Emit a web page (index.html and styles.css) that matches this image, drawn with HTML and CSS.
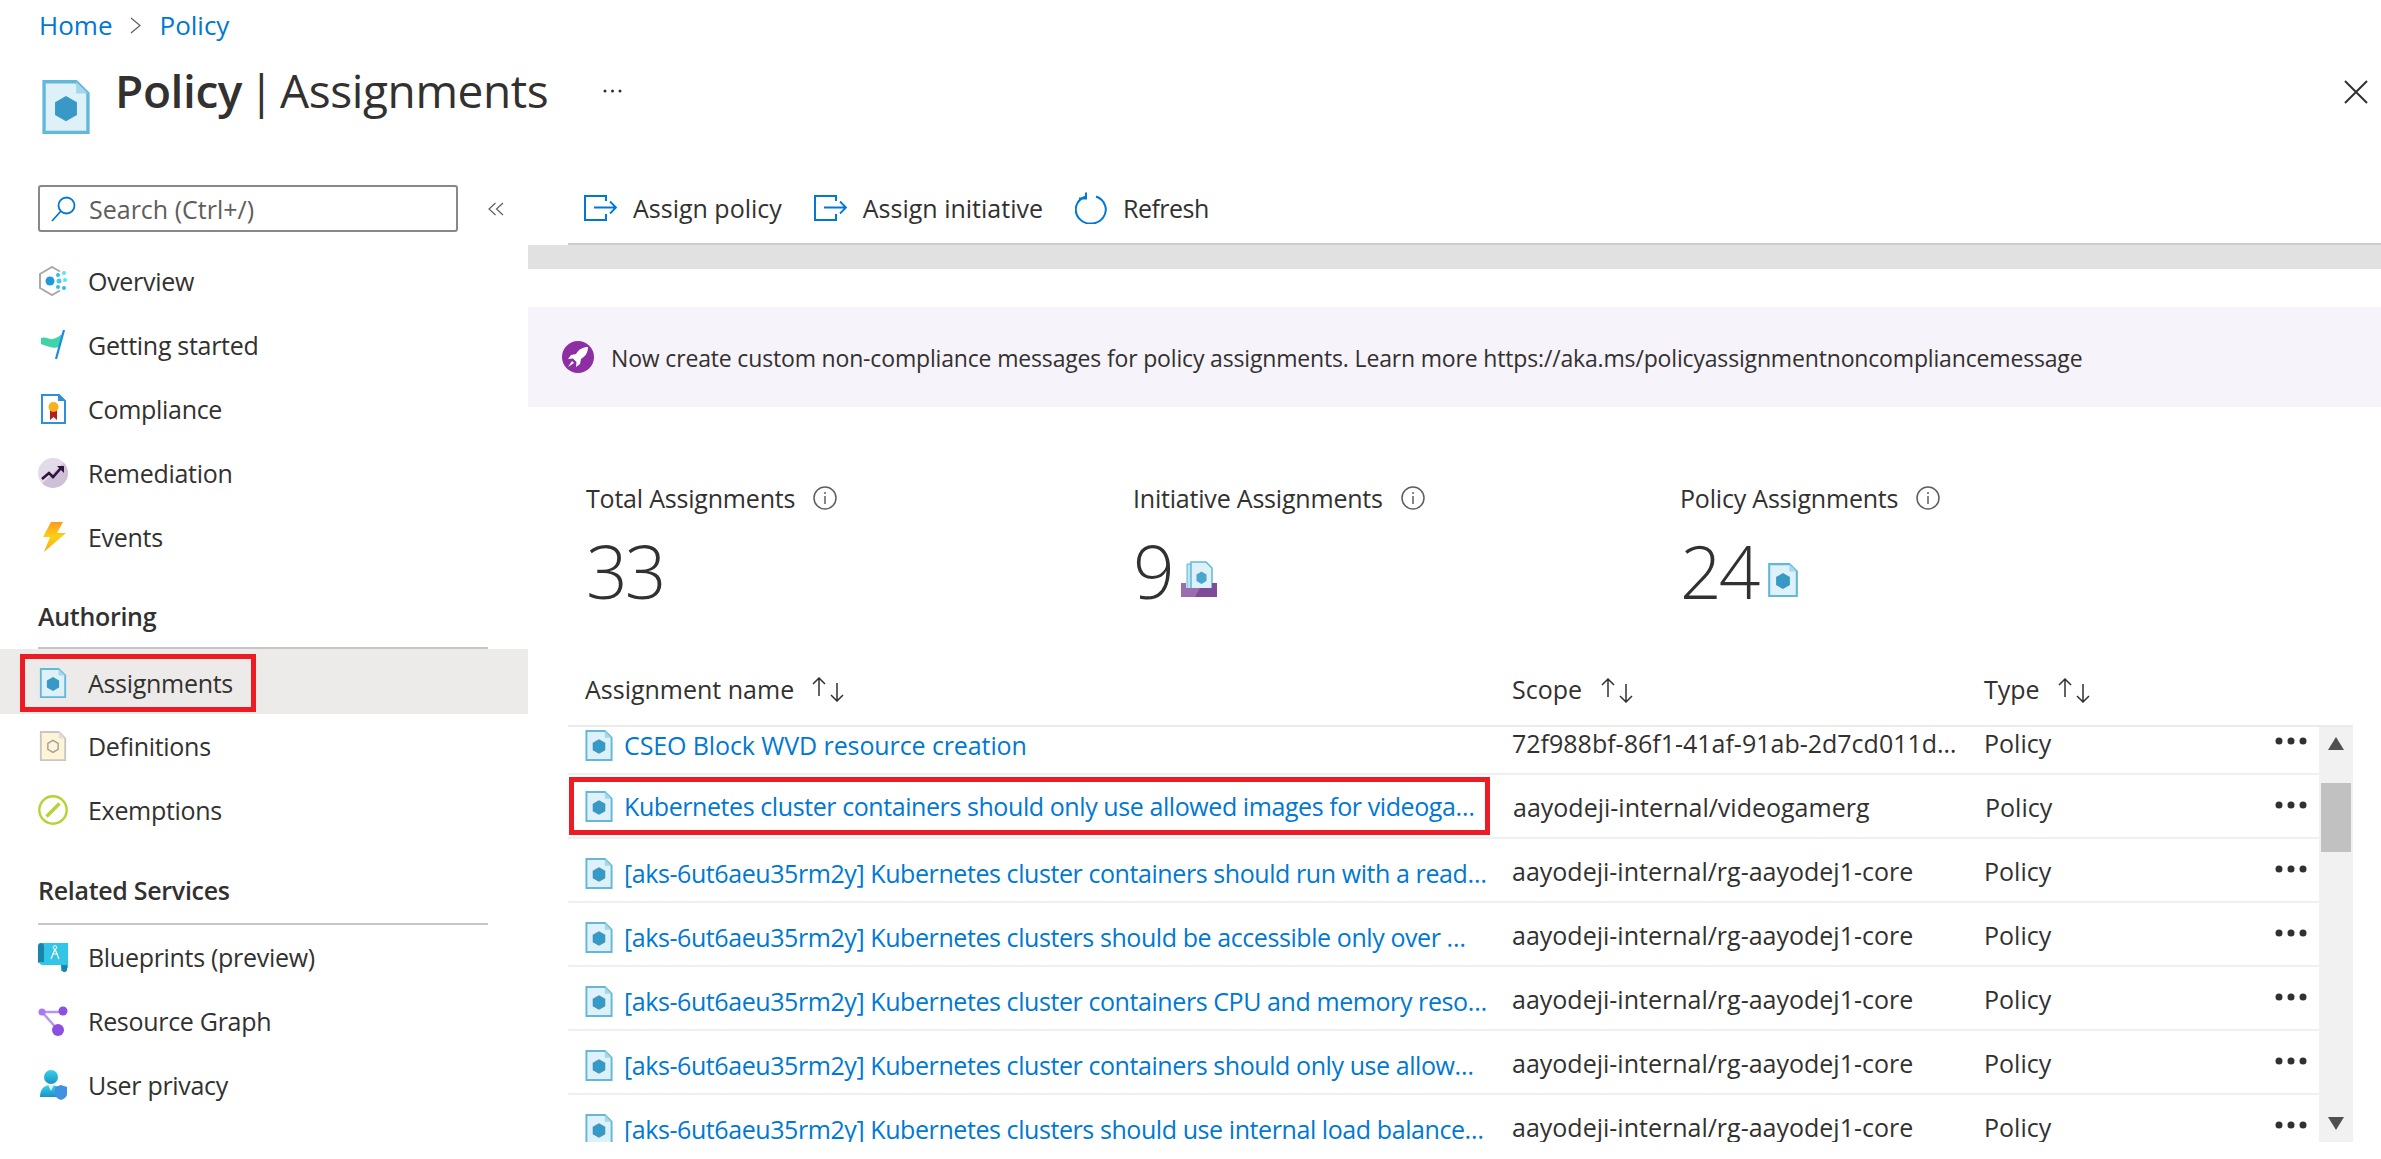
FILE: index.html
```html
<!DOCTYPE html>
<html lang="en">
<head>
    <meta charset="UTF-8">
    <title>Policy | Assignments</title>
    <link rel="stylesheet" href="styles.css">
</head>
<body>
    <svg class="icon-defs" xmlns="http://www.w3.org/2000/svg">
        <defs>
            <linearGradient id="boltFill" x1="0" y1="0" x2="0" y2="1">
                <stop offset="0" stop-color="#fc9a1d"/>
                <stop offset="0.5" stop-color="#fcd116"/>
                <stop offset="1" stop-color="#fba51a"/>
            </linearGradient>
            <linearGradient id="personFill" x1="0" y1="0" x2="0" y2="1">
                <stop offset="0" stop-color="#37d3ec"/>
                <stop offset="1" stop-color="#1b93c0"/>
            </linearGradient>
        </defs>
        <symbol id="i-policy" viewBox="0 0 28 32">
            <path d="M1 1h19l7 7v23H1z" fill="#def0f8" stroke="#62b8da" stroke-width="2"/>
            <path d="M20 1l7 7h-7z" fill="#a3d7ec"/>
            <path d="M14 9.500l6.500 3.700v7.600L14 24.500l-6.500-3.700v-7.600z" fill="#3999c6"/>
        </symbol>
        <symbol id="i-initiative" viewBox="0 0 36 36">
            <path d="M6 3h14l6 6v20H6z" fill="#bfe3f1" stroke="#62b8da" stroke-width="1"/>
            <path d="M10 1h15l6 6v24H10z" fill="#def0f8" stroke="#62b8da" stroke-width="1.500"/>
            <path d="M20.500 10.500l5 3v6.500l-5 3-5-3v-6.500z" fill="#4ba6cf"/>
            <path d="M0 36V22h5v5h26v-5h5v14z" fill="#7f4b98"/>
            <path d="M0 36V22h5v5h14l-5 9z" fill="#9c6dae"/>
        </symbol>
        <symbol id="i-assign" viewBox="0 0 33 26">
            <path d="M22 6V1H1v24h21v-6" fill="none" stroke="#0078d4" stroke-width="2"/>
            <path d="M10 12.500h22M26 6.500l6 6-6 6" fill="none" stroke="#0078d4" stroke-width="1.800"/>
        </symbol>
        <symbol id="i-refresh" viewBox="0 0 33 32">
            <path d="M21 4.500a15 14 0 1 1-11 .2" fill="none" stroke="#0078d4" stroke-width="2"/>
            <path d="M11 .5v6H4" fill="none" stroke="#0078d4" stroke-width="2"/>
        </symbol>
        <symbol id="i-sort" viewBox="0 0 32 25">
            <path d="M7 19V1M1 7l6-6 6 6M25 6v18M19 18l6 6 6-6" fill="none" stroke="#323130" stroke-width="1.500"/>
        </symbol>
        <symbol id="i-info" viewBox="0 0 24 24">
            <circle cx="12" cy="12" r="11" fill="none" stroke="#605e5c" stroke-width="1.500"/>
            <path d="M12 10v8" stroke="#605e5c" stroke-width="1.500"/>
            <circle cx="12" cy="7" r="1" fill="#605e5c"/>
        </symbol>
        <symbol id="i-more" viewBox="0 0 32 12">
            <circle cx="4" cy="6" r="3.500" fill="#323130"/>
            <circle cx="16" cy="6" r="3.500" fill="#323130"/>
            <circle cx="28" cy="6" r="3.500" fill="#323130"/>
        </symbol>
    </svg>

    <nav class="breadcrumb">
        <a href="#">Home</a>
        <svg class="crumb-sep" viewBox="0 0 11 17"><path d="M1 1l9 7.500-9 7.500" fill="none" stroke="#605e5c" stroke-width="1.200"/></svg>
        <a href="#">Policy</a>
    </nav>

    <header class="page-title">
        <svg class="title-icon"><use href="#i-policy"/></svg>
        <h1><b>Policy</b> | Assignments</h1>
        <svg class="title-more" viewBox="0 0 19 4"><circle cx="2" cy="2" r="1.500" fill="#323130"/><circle cx="9.500" cy="2" r="1.500" fill="#323130"/><circle cx="17" cy="2" r="1.500" fill="#323130"/></svg>
        <svg class="title-close" viewBox="0 0 24 24"><path d="M1 1l22 22M23 1L1 23" stroke="#323130" stroke-width="2"/></svg>
    </header>

    <div class="layout">
        <aside class="sidebar">
            <div class="search-row">
                <div class="search-box">
                    <svg class="search-icon" viewBox="0 0 25 26"><circle cx="15.500" cy="9.500" r="8" fill="none" stroke="#0078d4" stroke-width="1.800"/><path d="M10 15L1 25" stroke="#0078d4" stroke-width="1.800"/></svg>
                    <span>Search (Ctrl+/)</span>
                </div>
                <svg class="collapse-icon" viewBox="0 0 16 14"><path d="M7.500 1L1 7l6.500 6M15 1L8.500 7l6.500 6" fill="none" stroke="#605e5c" stroke-width="1.200"/></svg>
            </div>

            <a class="nav-item" href="#">
                <svg class="nav-icon" viewBox="0 0 30 30"><path d="M22 5.500L14 1 2 8v14l12 7 8-4.500" fill="none" stroke="#a8a8a8" stroke-width="2"/><circle cx="12" cy="15" r="4.500" fill="#1f9ad6"/><circle cx="20" cy="9" r="2" fill="#32bedd"/><circle cx="26" cy="7" r="2" fill="#50e6ff"/><circle cx="21" cy="15" r="2.500" fill="#50c8e8"/><circle cx="27" cy="14" r="2" fill="#50e6ff"/><circle cx="20" cy="21" r="2" fill="#32bedd"/><circle cx="26" cy="22" r="2" fill="#32bedd"/></svg>
                Overview
            </a>
            <a class="nav-item" href="#">
                <svg class="nav-icon" viewBox="0 0 30 30"><path d="M3 8c5-2 8 2 12 1s6-3 9-5l-3 13c-3 1-5 1-9 0s-6-2-9-3z" fill="#3cd4a8"/><path d="M26 0l-8 29" stroke="#1e88e5" stroke-width="2.200"/></svg>
                Getting started
            </a>
            <a class="nav-item" href="#">
                <svg class="nav-icon" viewBox="0 0 30 30"><path d="M4 1h17l6 6v22H4z" fill="#fff" stroke="#2f8fdc" stroke-width="2"/><path d="M20 1l7 6h-7z" fill="#2f8fdc"/><path d="M12 15h7v11l-3.500-3-3.500 3z" fill="#b91c1c"/><circle cx="15.500" cy="13" r="5" fill="#f7b21b"/></svg>
                Compliance
            </a>
            <a class="nav-item" href="#">
                <svg class="nav-icon" viewBox="0 0 30 30"><circle cx="15" cy="15" r="15" fill="#e3dbe9"/><path d="M4.400 25.600L25.600 4.400A15 15 0 0 1 25.600 25.600 15 15 0 0 1 4.400 25.600z" fill="#cfc0da"/><path d="M4 21l7-6 4 4 8-9" fill="none" stroke="#32123f" stroke-width="2.600"/><path d="M19 8h7v7z" fill="#32123f"/></svg>
                Remediation
            </a>
            <a class="nav-item" href="#">
                <svg class="nav-icon" viewBox="0 0 30 30"><path d="M13 0h12l-6 11h9L6 30l6-15H5z" fill="url(#boltFill)"/></svg>
                Events
            </a>

            <h2 class="nav-heading">Authoring</h2>
            <div class="nav-item is-selected">
                <a class="nav-marked" href="#">
                    <svg class="nav-icon"><use href="#i-policy"/></svg>
                    Assignments
                </a>
            </div>
            <a class="nav-item" href="#">
                <svg class="nav-icon" viewBox="0 0 28 32"><path d="M1 1h19l7 7v23H1z" fill="#fff4d6" stroke="#c8c6c4" stroke-width="2"/><path d="M20 1l7 7h-7z" fill="#e1dfdd"/><path d="M14 10l5.500 3.200v6.400L14 22.800l-5.500-3.200v-6.400z" fill="none" stroke="#a19f9d" stroke-width="1.500"/></svg>
                Definitions
            </a>
            <a class="nav-item" href="#">
                <svg class="nav-icon" viewBox="0 0 30 30"><circle cx="15" cy="15" r="13.700" fill="#fff" stroke="#b4d334" stroke-width="2.400"/><path d="M8.500 21.500l13-13" stroke="#b4d334" stroke-width="3.400"/></svg>
                Exemptions
            </a>

            <h2 class="nav-heading second">Related Services</h2>
            <a class="nav-item" href="#">
                <svg class="nav-icon" viewBox="0 0 30 30"><path d="M4 1h26v25h-4v3h-3v-6H5a4 4 0 0 1-4-4V4z" fill="#32c5e8"/><path d="M0 4a3 3 0 0 1 6 0v16H2l-2 1z" fill="#1a85ac"/><path d="M23 23h6v4a2.500 2.500 0 0 1-5 1z" fill="#1a85ac"/><path d="M17 7l-4 10M17 7l4 10M14 12h6" fill="none" stroke="#fff" stroke-width="1.200"/><circle cx="17" cy="5.500" r="1.800" fill="none" stroke="#fff" stroke-width="1"/></svg>
                Blueprints (preview)
            </a>
            <a class="nav-item" href="#">
                <svg class="nav-icon" viewBox="0 0 30 30"><path d="M4 6h22M4 6l16 18" stroke="#b796f0" stroke-width="2.500"/><circle cx="4" cy="6" r="3.500" fill="#a67af4"/><circle cx="25" cy="5" r="4.500" fill="#8c4fe0"/><circle cx="20" cy="24" r="6" fill="#8c4fe0"/></svg>
                Resource Graph
            </a>
            <a class="nav-item" href="#">
                <svg class="nav-icon" viewBox="0 0 30 30"><circle cx="13" cy="7" r="7" fill="url(#personFill)"/><path d="M2 27c0-8 4-12 11-12s10 4 11 12z" fill="url(#personFill)"/><path d="M10 15h6l-3 6z" fill="#d8f4fb"/><path d="M17 17l6-2 6 2v7c0 3-3 5-6 6-3-1-6-3-6-6z" fill="#3f92e0"/></svg>
                User privacy
            </a>
        </aside>

        <main class="content">
            <div class="toolbar">
                <button class="tool-btn"><svg class="tool-icon"><use href="#i-assign"/></svg>Assign policy</button>
                <button class="tool-btn"><svg class="tool-icon"><use href="#i-assign"/></svg>Assign initiative</button>
                <button class="tool-btn is-refresh"><svg class="tool-icon refresh"><use href="#i-refresh"/></svg>Refresh</button>
            </div>
            <div class="band"></div>

            <div class="banner">
                <svg class="banner-icon" viewBox="0 0 32 32"><circle cx="16" cy="16" r="16" fill="#8e2ea4"/><path d="M26 6c-5 0-9 2-12 7l-5 1-3 4 5-.5 3.500 3.500-.5 5 4-3 1-5c5-3 7-7 7-12z" fill="#fff"/><path d="M10 20l-4 6 6-4z" fill="#fff"/></svg>
                Now create custom non-compliance messages for policy assignments. Learn more https://aka.ms/policyassignmentnoncompliancemessage
            </div>

            <section class="stats">
                <div class="stat">
                    <div class="stat-label">Total Assignments <svg class="info-icon"><use href="#i-info"/></svg></div>
                    <div class="stat-value">33</div>
                </div>
                <div class="stat">
                    <div class="stat-label">Initiative Assignments <svg class="info-icon"><use href="#i-info"/></svg></div>
                    <div class="stat-value">9 <svg class="stat-icon wide"><use href="#i-initiative"/></svg></div>
                </div>
                <div class="stat">
                    <div class="stat-label">Policy Assignments <svg class="info-icon"><use href="#i-info"/></svg></div>
                    <div class="stat-value">24 <svg class="stat-icon"><use href="#i-policy"/></svg></div>
                </div>
            </section>

            <section class="table">
                <div class="table-head">
                    <div class="col-name">Assignment name <svg class="sort-icon"><use href="#i-sort"/></svg></div>
                    <div class="col-scope">Scope <svg class="sort-icon"><use href="#i-sort"/></svg></div>
                    <div class="col-type">Type <svg class="sort-icon"><use href="#i-sort"/></svg></div>
                </div>
                <div class="table-body">
                    <div class="rows">
                        <div class="row is-scrolled">
                            <div class="col-name"><svg class="row-icon"><use href="#i-policy"/></svg><a href="#">CSEO Block WVD resource creation</a></div>
                            <div class="col-scope">72f988bf-86f1-41af-91ab-2d7cd011db47/providers/Microsoft</div>
                            <div class="col-type">Policy</div>
                            <svg class="more-icon"><use href="#i-more"/></svg>
                        </div>
                        <div class="row">
                            <div class="col-name is-marked"><svg class="row-icon"><use href="#i-policy"/></svg><a href="#">Kubernetes cluster containers should only use allowed images for videogamerg</a></div>
                            <div class="col-scope">aayodeji-internal/videogamerg</div>
                            <div class="col-type">Policy</div>
                            <svg class="more-icon"><use href="#i-more"/></svg>
                        </div>
                        <div class="row">
                            <div class="col-name"><svg class="row-icon"><use href="#i-policy"/></svg><a href="#">[aks-6ut6aeu35rm2y] Kubernetes cluster containers should run with a read-only root filesystem</a></div>
                            <div class="col-scope">aayodeji-internal/rg-aayodej1-core</div>
                            <div class="col-type">Policy</div>
                            <svg class="more-icon"><use href="#i-more"/></svg>
                        </div>
                        <div class="row">
                            <div class="col-name is-short"><svg class="row-icon"><use href="#i-policy"/></svg><a href="#">[aks-6ut6aeu35rm2y] Kubernetes clusters should be accessible only over HTTPS</a></div>
                            <div class="col-scope">aayodeji-internal/rg-aayodej1-core</div>
                            <div class="col-type">Policy</div>
                            <svg class="more-icon"><use href="#i-more"/></svg>
                        </div>
                        <div class="row">
                            <div class="col-name"><svg class="row-icon"><use href="#i-policy"/></svg><a href="#">[aks-6ut6aeu35rm2y] Kubernetes cluster containers CPU and memory resource limits should not exceed the specified limits</a></div>
                            <div class="col-scope">aayodeji-internal/rg-aayodej1-core</div>
                            <div class="col-type">Policy</div>
                            <svg class="more-icon"><use href="#i-more"/></svg>
                        </div>
                        <div class="row">
                            <div class="col-name is-short"><svg class="row-icon"><use href="#i-policy"/></svg><a href="#">[aks-6ut6aeu35rm2y] Kubernetes cluster containers should only use allowed images</a></div>
                            <div class="col-scope">aayodeji-internal/rg-aayodej1-core</div>
                            <div class="col-type">Policy</div>
                            <svg class="more-icon"><use href="#i-more"/></svg>
                        </div>
                        <div class="row">
                            <div class="col-name"><svg class="row-icon"><use href="#i-policy"/></svg><a href="#">[aks-6ut6aeu35rm2y] Kubernetes clusters should use internal load balancers only</a></div>
                            <div class="col-scope">aayodeji-internal/rg-aayodej1-core</div>
                            <div class="col-type">Policy</div>
                            <svg class="more-icon"><use href="#i-more"/></svg>
                        </div>
                    </div>
                    <div class="scrollbar">
                        <div class="arrow-up"></div>
                        <div class="thumb"></div>
                        <div class="arrow-down"></div>
                    </div>
                </div>
            </section>
        </main>
    </div>
</body>
</html>
```

FILE: styles.css
```css
* {
    box-sizing: border-box;
}

html, body {
    height: 100%;
}

body {
    margin: 0;
    overflow: hidden;
    background: #ffffff;
    color: #323130;
    font-family: "Open Sans", "Noto Sans", sans-serif;
    font-size: 25px;
}

a {
    color: inherit;
    text-decoration: none;
}

.icon-defs {
    position: absolute;
    width: 0;
    height: 0;
}

/* header */
.breadcrumb {
    display: flex;
    align-items: center;
    gap: 18px;
    height: 50px;
    padding-left: 39px;
    color: #0078d4;
    font-size: 26px;
}

.crumb-sep {
    width: 11px;
    height: 17px;
}

.page-title {
    display: flex;
    align-items: flex-start;
    height: 135px;
    padding-left: 42px;
}

.title-icon {
    width: 48px;
    height: 54px;
    margin-top: 30px;
}

.page-title h1 {
    margin: 10px 0 0 25px;
    font-size: 46px;
    font-weight: 400;
    line-height: 60px;
    letter-spacing: -0.4px;
    word-spacing: -5px;
}

.page-title h1 b {
    font-weight: 600;
}

.title-more {
    width: 19px;
    height: 4px;
    margin: 39px 0 0 55px;
}

.title-close {
    width: 24px;
    height: 24px;
    margin: 30px 13px 0 auto;
}

.layout {
    display: flex;
}

/* sidebar */
.sidebar {
    flex: none;
    width: 528px;
    letter-spacing: -0.3px;
}

.search-row {
    display: flex;
    align-items: center;
    margin-bottom: 17px;
    padding-left: 38px;
}

.search-box {
    display: flex;
    align-items: center;
    gap: 13px;
    width: 420px;
    height: 47px;
    padding-left: 11px;
    border: 2px solid #8a8886;
    border-radius: 3px;
    color: #605e5c;
    letter-spacing: 0;
}

.search-icon {
    width: 25px;
    height: 26px;
}

.collapse-icon {
    width: 16px;
    height: 14px;
    margin-left: 30px;
}

.nav-item {
    display: flex;
    align-items: center;
    gap: 20px;
    height: 64px;
    padding-left: 38px;
}

.nav-icon {
    flex: none;
    width: 30px;
    height: 30px;
}

.nav-heading {
    width: 450px;
    margin: 0 0 0 38px;
    padding: 30px 0 14px;
    border-bottom: 2px solid #c8c6c4;
    font-size: 25px;
    font-weight: 600;
    line-height: 34px;
}

.nav-heading.second {
    padding: 31px 0 16px;
}

.nav-item.is-selected {
    height: 65px;
    padding-left: 20px;
    background: #edebe9;
}

.nav-marked {
    display: flex;
    align-items: center;
    gap: 20px;
    height: 58px;
    margin-top: 2px;
    padding: 0 18px 0 13px;
    border: 5px solid #ed1c24;
}

/* main */
.content {
    flex: 1;
    min-width: 0;
}

.toolbar {
    display: flex;
    gap: 32px;
    height: 60px;
    margin-left: 40px;
    padding: 0 0 12px 16px;
    border-bottom: 2px solid #cccccc;
}

.tool-btn {
    display: flex;
    align-items: center;
    gap: 16px;
    padding: 0;
    border: none;
    background: none;
    color: #323130;
    font: inherit;
}

.tool-btn.is-refresh {
    gap: 15px;
    letter-spacing: -0.5px;
}

.tool-icon {
    width: 33px;
    height: 26px;
}

.tool-icon.refresh {
    height: 32px;
}

.band {
    height: 24px;
    background: #e1e1e1;
}

.banner {
    display: flex;
    align-items: center;
    gap: 17px;
    height: 100px;
    margin-top: 38px;
    padding: 2px 0 0 34px;
    background: #f7f3fa;
    font-size: 23px;
    letter-spacing: -0.165px;
}

.banner-icon {
    width: 32px;
    height: 32px;
    margin-top: -2px;
}

.stats {
    display: flex;
    margin-top: 74px;
    padding-left: 58px;
    letter-spacing: -0.2px;
}

.stat {
    width: 547px;
}

.stat-label {
    display: flex;
    align-items: center;
    gap: 18px;
    height: 34px;
}

.info-icon {
    width: 24px;
    height: 24px;
}

.stat-value {
    display: flex;
    align-items: flex-end;
    gap: 9px;
    height: 80px;
    margin-top: 16px;
    font-size: 73px;
    font-weight: 300;
    line-height: 80px;
    letter-spacing: -3px;
}

.stat-icon {
    width: 30px;
    height: 34px;
    margin: 0 0 14px 2px;
}

.stat-icon.wide {
    width: 36px;
    height: 36px;
    margin-left: 0;
}

/* table */
.table {
    width: 1785px;
    margin: 44px 0 0 40px;
}

.table-head {
    display: flex;
    align-items: center;
    height: 72px;
    padding-bottom: 2px;
    border-bottom: 2px solid #edebe9;
}

.col-name {
    display: flex;
    align-items: center;
    flex: none;
    width: 928px;
    padding: 0 5px 0 17px;
}

.col-name.is-short {
    padding-right: 14px;
}

.col-scope {
    flex: none;
    width: 472px;
    margin-top: -4px;
    padding: 0 8px 0 16px;
    overflow: hidden;
    white-space: nowrap;
    text-overflow: ellipsis;
}

.col-type {
    flex: 1;
    margin-top: -4px;
    padding-left: 16px;
}

.table-head .col-scope, .table-head .col-type {
    margin-top: 0;
    overflow: visible;
}

.sort-icon {
    flex: none;
    width: 32px;
    height: 25px;
    margin-left: 12px;
    vertical-align: -4px;
}

.table-head .col-name .sort-icon {
    margin-left: 18px;
}

.table-body {
    display: flex;
    height: 415px;
}

.rows {
    flex: 1;
    min-width: 0;
    overflow: hidden;
}

.row {
    display: flex;
    align-items: center;
    height: 64px;
    padding-top: 6px;
    border-bottom: 2px solid #f0f0f0;
}

.row.is-scrolled {
    margin-top: -16px;
}

.row-icon {
    flex: none;
    width: 28px;
    height: 31px;
    margin-right: 11px;
}

.row .col-name a {
    min-width: 0;
    overflow: hidden;
    color: #0078d4;
    letter-spacing: -0.42px;
    white-space: nowrap;
    text-overflow: ellipsis;
}

.row.is-scrolled .col-name a {
    letter-spacing: -0.1px;
}

.col-name.is-marked {
    width: 921px;
    height: 58px;
    margin: -6px 7px 0 1px;
    padding: 0 6px 0 11px;
    border: 5px solid #ed1c24;
}

.more-icon {
    flex: none;
    width: 32px;
    height: 12px;
    margin: -8px 12px 0 0;
}

.scrollbar {
    display: flex;
    flex-direction: column;
    align-items: center;
    flex: none;
    width: 34px;
    padding: 10px 0 12px;
    background: #f1f1f1;
}

.arrow-up {
    border-right: 8px solid transparent;
    border-left: 8px solid transparent;
    border-bottom: 13px solid #505050;
}

.thumb {
    width: 30px;
    height: 69px;
    margin-top: 33px;
    background: #c1c1c1;
}

.arrow-down {
    margin-top: auto;
    border-right: 8px solid transparent;
    border-left: 8px solid transparent;
    border-top: 13px solid #505050;
}
```
